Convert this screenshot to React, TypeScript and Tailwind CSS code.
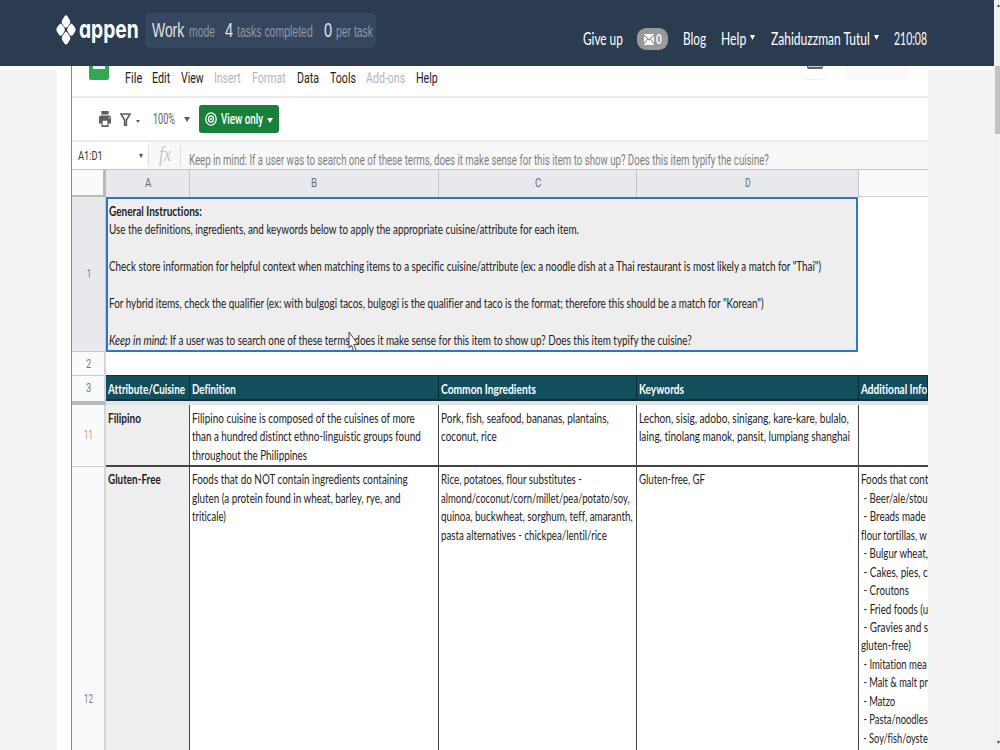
import { useLayoutEffect, useRef, useState } from 'react';

import type React from 'react';

interface FitProps {
  w: number;
  className?: string;
  children: React.ReactNode;
}

// Condenses a single line of text to the given width
function Fit({ w, className = '', children }: FitProps) {
  const ref = useRef<HTMLSpanElement>(null);
  const [scale, setScale] = useState(1);

  useLayoutEffect(() => {
    if (ref.current) setScale(w / ref.current.offsetWidth);
  }, [w]);

  return (
    <span className={`block shrink-0 whitespace-pre ${className}`} style={{ width: w }}>
      <span
        ref={ref}
        className="inline-block origin-left align-top"
        style={{ transform: `scaleX(${scale})` }}
      >
        {children}
      </span>
    </span>
  );
}

type Line = [text: string, width: number];

function Lines({ lines, className = '' }: { lines: Line[]; className?: string }) {
  return (
    <div className={`text-[14px] leading-[18.45px] ${className}`}>
      {lines.map(([text, width]) => (
        <Fit key={text} w={width}>
          {text}
        </Fit>
      ))}
    </div>
  );
}

function Caret({ className = '' }: { className?: string }) {
  return (
    <svg viewBox="0 0 10 6" preserveAspectRatio="none" className={`shrink-0 ${className}`}>
      <path d="M0 0h10L5 6z" fill="currentColor" />
    </svg>
  );
}

const menu: { label: string; width: number; gap: string; muted?: boolean }[] = [
  { label: 'File', width: 17, gap: 'ml-[17px]' },
  { label: 'Edit', width: 18, gap: 'ml-[10px]' },
  { label: 'View', width: 23, gap: 'ml-[11px]' },
  { label: 'Insert', width: 27, gap: 'ml-[10px]', muted: true },
  { label: 'Format', width: 34, gap: 'ml-[11px]', muted: true },
  { label: 'Data', width: 22, gap: 'ml-[11px]' },
  { label: 'Tools', width: 26, gap: 'ml-[11px]' },
  { label: 'Add-ons', width: 39, gap: 'ml-[10px]', muted: true },
  { label: 'Help', width: 22, gap: 'ml-[11px]' },
];

const glutenInfo: Line[] = [
  ['Foods that cont', 67],
  [' - Beer/ale/stou', 67],
  [' - Breads made', 65],
  ['flour tortillas, w', 66],
  [' - Bulgur wheat,', 67],
  [' - Cakes, pies, c', 67],
  [' - Croutons', 48],
  [' - Fried foods (u', 67],
  [' - Gravies and s', 67],
  ['gluten-free)', 50],
  [' - Imitation mea', 66],
  [' - Malt & malt pr', 67],
  [' - Matzo', 34],
  [' - Pasta/noodles', 67],
  [' - Soy/fish/oyste', 67],
];

function Header() {
  return (
    <header className="flex h-[66px] shrink-0 bg-[#2b3c50] text-white">
      <svg viewBox="0 0 20 30" className="mt-[15px] ml-[56px] h-[30px] w-[20px] shrink-0" fill="#fff">
        <path d="M10 0Q11.200 .3 14 5.400Q14.600 6.800 14 8.200Q11.400 12.800 10 12.800Q8.600 12.800 6 8.200Q5.400 6.800 6 5.400Q8.800 .3 10 0Z" />
        <path d="M10 16.600Q11.200 16.900 14 21.800Q14.600 23.200 14 24.500Q11.400 29.500 10 29.500Q8.600 29.500 6 24.500Q5.400 23.200 6 21.800Q8.800 16.900 10 16.600Z" />
        <path d="M4.600 8.600Q5.800 8.900 8.600 13.500Q9.100 14.800 8.600 16.100Q6 21 4.600 21Q3.300 21 .6 16.100Q.1 14.800 .6 13.500Q3.400 8.900 4.600 8.600Z" />
        <path d="M15.400 8.600Q16.600 8.900 19.400 13.500Q19.900 14.800 19.400 16.100Q16.800 21 15.400 21Q14.100 21 11.400 16.100Q10.900 14.800 11.400 13.500Q14.200 8.900 15.400 8.600Z" />
      </svg>
      <Fit
        w={60}
        className="mt-[14px] ml-[3px] font-[Inter,sans-serif] text-[25px] leading-[30px] font-bold [font-feature-settings:'cv11']"
      >
        appen
      </Fit>
      <div className="mt-[13px] ml-[6px] flex h-[35px] w-[231px] shrink-0 items-baseline rounded-[5px] bg-[#34475f] pl-[7px] font-['Liberation_Sans',sans-serif] leading-[34px] text-[#e2e2e2]">
        <Fit w={32} className="text-[20px]">Work</Fit>
        <Fit w={26} className="ml-[5px] text-[16px] text-[#8f969e]">mode</Fit>
        <Fit w={8} className="ml-[10px] text-[20px]">4</Fit>
        <Fit w={76} className="ml-[4px] text-[16px] text-[#8f969e]">tasks completed</Fit>
        <Fit w={8} className="ml-[11px] text-[20px]">0</Fit>
        <Fit w={37} className="ml-[4px] text-[16px] text-[#8f969e]">per task</Fit>
      </div>
      <nav className="mt-[13px] ml-[207px] flex h-[50px] items-center text-[18px]">
        <Fit w={40}>Give up</Fit>
        <span className="mt-[2px] ml-[14px] flex h-[22px] w-[31px] shrink-0 items-center rounded-[9px] bg-[#999] pl-[7px]">
          <svg viewBox="0 0 10 11" className="h-[11px] w-[10px] shrink-0">
            <path d="M0 0h10v11H0z" fill="#fff" />
            <path d="M0 1l5 5 5-5M0 10l3.500-5M10 10L6.500 5" fill="none" stroke="#999" strokeWidth="1.100" />
          </svg>
          <Fit w={6} className="ml-[2px] text-[13px] leading-[22px] font-bold">0</Fit>
        </span>
        <Fit w={23} className="ml-[15px]">Blog</Fit>
        <Fit w={25} className="ml-[15px]">Help</Fit>
        <Caret className="mb-[2px] ml-[4px] h-[5px] w-[5px]" />
        <Fit w={99} className="ml-[16px]">Zahiduzzman Tutul</Fit>
        <Caret className="mb-[2px] ml-[4px] h-[5px] w-[5px]" />
        <Fit w={33} className="mt-[3px] ml-[15px] text-[16.500px]">210:08</Fit>
      </nav>
    </header>
  );
}

function MenuBar() {
  return (
    <div className="flex h-[32px] shrink-0 border-b-2 border-[#ebebeb] font-[Roboto,sans-serif] text-[15.500px] leading-[24px] text-[#202124]">
      <div className="ml-[17px] h-[14px] w-[20px] shrink-0 rounded-b-[2px] bg-[#35a652] pl-[4px]">
        <div className="h-[3px] w-[12px] bg-[#e6f5ea]" />
      </div>
      <div className="ml-[-1px] flex w-[698px] shrink-0">
        {menu.map((item) => (
          <Fit
            key={item.label}
            w={item.width}
            className={`${item.gap} ${item.muted ? 'text-[#b4b6b9]' : ''}`}
          >
            {item.label}
          </Fit>
        ))}
      </div>
      <div className="ml-[-8px] flex h-[14px] w-[34px] shrink-0 justify-center rounded-b-[14px] border-b border-[#eee]">
        <div className="h-[3px] w-[16px] rounded-b-[2px] border-x border-b-2 border-[#5f6368] bg-[#ccc]" />
      </div>
      <div className="ml-[13px] h-[14px] w-[65px] shrink-0 bg-[#fafafa]" />
    </div>
  );
}

function Toolbar() {
  return (
    <div className="flex h-[44px] shrink-0 items-center border-b-2 border-[#ebebeb] font-[Roboto,sans-serif] text-[#5a5d61]">
      <svg viewBox="2 3 20 18" preserveAspectRatio="none" className="ml-[27px] h-[16px] w-[12px] shrink-0">
        <path
          d="M19 8H5c-1.660 0-3 1.340-3 3v6h4v4h12v-4h4v-6c0-1.660-1.340-3-3-3zm-3 11H8v-5h8v5zm3-7c-.55 0-1-.45-1-1s.45-1 1-1 1 .45 1 1-.45 1-1 1zm-1-9H6v4h12V3z"
          fill="currentColor"
        />
      </svg>
      <svg viewBox="0 0 12 13" preserveAspectRatio="none" className="ml-[9px] h-[13px] w-[11px] shrink-0">
        <path d="M1 1h10L7 7v5.500H5V7z" fill="none" stroke="currentColor" strokeWidth="1.700" />
      </svg>
      <Caret className="mt-[4px] ml-[5px] h-[3px] w-[4px]" />
      <Fit w={22} className="ml-[13px] text-[14px]">100%</Fit>
      <Caret className="mt-[1px] ml-[9px] h-[5px] w-[6px]" />
      <button className="ml-[9px] flex h-[28px] w-[80px] shrink-0 items-center rounded-[3px] bg-[#188038] pl-[6px] text-white">
        <svg viewBox="0 0 12 14" className="h-[14px] w-[12px] shrink-0" fill="none" stroke="#fff">
          <ellipse cx="6" cy="7" rx="5.200" ry="6.100" strokeWidth="1.300" />
          <ellipse cx="6" cy="7" rx="2.500" ry="3.200" strokeWidth="1.300" />
          <ellipse cx="6" cy="7" rx=".7" ry="1" fill="#fff" strokeWidth=".5" />
        </svg>
        <Fit w={42} className="ml-[4px] text-[14px] font-medium">View only</Fit>
        <Caret className="mt-[2px] ml-[4px] h-[5px] w-[6px]" />
      </button>
    </div>
  );
}

function FormulaBar() {
  return (
    <div className="flex h-[27px] shrink-0 items-center bg-[#f8f8f8] font-[Roboto,sans-serif]">
      <div className="flex h-full w-[76px] shrink-0 items-center bg-white pl-[6px] text-[#333]">
        <Fit w={25} className="text-[13px]">A1:D1</Fit>
        <Caret className="ml-[36px] h-[4px] w-[4px] text-[#555]" />
      </div>
      <div className="h-[21px] w-px bg-[#ddd]" />
      <Fit w={12} className="mb-[4px] ml-[10px] font-['Liberation_Serif',serif] text-[21px] leading-[24px] text-[#c4c4c4] italic">
        fx
      </Fit>
      <div className="ml-[9px] h-[21px] w-px bg-[#ddd]" />
      <Fit w={580} className="mt-[9px] ml-[8px] text-[14px] leading-[18px] text-[#808080]">
        Keep in mind: If a user was to search one of these terms, does it make sense for this item to show up? Does this item typify the cuisine?
      </Fit>
    </div>
  );
}

const columns = 'grid w-[856px] shrink-0 grid-cols-[34px_84px_249px_198px_222px_69px]';
const rowHead =
  'flex items-center justify-center border-r-2 border-r-[#d3d5d9] bg-[#f9fafc] font-[Roboto,sans-serif] text-[13px] text-[#777b80]';
const darkCell = 'overflow-hidden border-r border-[#444] pl-[2px]';

function Sheet() {
  return (
    <div className="flex flex-col text-[#222] [font-variant-ligatures:none]">
      <div className={`${columns} h-[28px] border-t border-[#c4c6c9] font-[Roboto,sans-serif] text-[13px] leading-[26px] text-[#6c7075]`}>
        <div className="border-r-3 border-b-2 border-r-[#b9b9b9] border-b-[#bbb] bg-[#f9fafc]" />
        {['A', 'B', 'C', 'D'].map((name) => (
          <div key={name} className="flex justify-center border-r border-[#c4c6c9] bg-[#e7e9ec]">
            <Fit w={6}>{name}</Fit>
          </div>
        ))}
        <div className="border-b border-[#d0d0d0] bg-[#f9fafc]" />
      </div>

      <div className="flex h-[155px] shrink-0">
        <div className="flex w-[34px] shrink-0 items-center justify-center border-r border-b border-[#c4c6c9] bg-[#e7e9ec] font-[Roboto,sans-serif] text-[13px] text-[#6c7075]">
          <Fit w={4}>1</Fit>
        </div>
        <div className="w-[752px] shrink-0 border-2 border-[#2f74c8] bg-[#eee] pt-[2.500px] pl-[1px] text-[14px] leading-[18.450px]">
          <Fit w={93} className="font-bold">General Instructions:</Fit>
          <Fit w={470}>
            Use the definitions, ingredients, and keywords below to apply the appropriate cuisine/attribute for each item.
          </Fit>
          <Fit w={712} className="mt-[18.450px]">
            Check store information for helpful context when matching items to a specific cuisine/attribute (ex: a noodle dish at a Thai restaurant is most likely a match for "Thai")
          </Fit>
          <Fit w={655} className="mt-[18.450px]">
            For hybrid items, check the qualifier (ex: with bulgogi tacos, bulgogi is the qualifier and taco is the format; therefore this should be a match for "Korean")
          </Fit>
          <div className="mt-[18.450px] flex">
            <Fit w={59} className="italic">Keep in mind:</Fit>
            <Fit w={522} className="ml-[2px]">
              If a user was to search one of these terms, does it make sense for this item to show up? Does this item typify the cuisine?
            </Fit>
          </div>
        </div>
      </div>

      <div className={`${columns} h-[23px]`}>
        <div className={rowHead}>
          <Fit w={5}>2</Fit>
        </div>
      </div>

      <div className={`${columns} h-[26px] text-[14px] font-bold text-white`}>
        <div className={`${rowHead} border-t border-t-[#ccc] pb-[2px] font-normal`}>
          <Fit w={5}>3</Fit>
        </div>
        {([
          ['Attribute/Cuisine', 77],
          ['Definition', 44],
          ['Common Ingredients', 95],
          ['Keywords', 45],
          ['Additional Info', 66],
        ] as Line[]).map(([text, width]) => (
          <div
            key={text}
            className="overflow-hidden border-t border-r border-b-2 border-y-[#1c2e35] border-r-[#0c2c35] bg-[#134e5c] pl-[2px] leading-[25px]"
          >
            <Fit w={width}>{text}</Fit>
          </div>
        ))}
      </div>

      <div className="flex h-[4px] shrink-0">
        <div className="w-[34px] bg-[#b9b9b9]" />
        <div className="w-[822px] bg-[#e0e3e8]" />
      </div>

      <div className={`${columns} h-[62px]`}>
        <div className={`${rowHead} border-b border-b-[#ccc] pb-[2px] text-[#b89a68]`}>
          <Fit w={9}>11</Fit>
        </div>
        <div className={`${darkCell} border-b-2 bg-[#eee] pt-[4px]`}>
          <Lines className="font-bold" lines={[['Filipino', 33]]} />
        </div>
        <div className={`${darkCell} border-b-2 pt-[4px]`}>
          <Lines
            lines={[
              ['Filipino cuisine is composed of the cuisines of more', 223],
              ['than a hundred distinct ethno-linguistic groups found', 229],
              ['throughout the Philippines', 115],
            ]}
          />
        </div>
        <div className={`${darkCell} border-b-2 pt-[4px]`}>
          <Lines
            lines={[
              ['Pork, fish, seafood, bananas, plantains,', 168],
              ['coconut, rice', 56],
            ]}
          />
        </div>
        <div className={`${darkCell} border-b-2 pt-[4px]`}>
          <Lines
            lines={[
              ['Lechon, sisig, adobo, sinigang, kare-kare, bulalo,', 210],
              ['laing, tinolang manok, pansit, lumpiang shanghai', 211],
            ]}
          />
        </div>
        <div className="border-b-2 border-[#444]" />
      </div>

      <div className={`${columns} h-[470px]`}>
        <div className={`${rowHead} pb-[7px]`}>
          <Fit w={9}>12</Fit>
        </div>
        <div className={`${darkCell} bg-[#eee] pt-[3.400px]`}>
          <Lines className="font-bold" lines={[['Gluten-Free', 53]]} />
        </div>
        <div className={`${darkCell} pt-[3.400px]`}>
          <Lines
            lines={[
              ['Foods that do NOT contain ingredients containing', 216],
              ['gluten (a protein found in wheat, barley, rye, and', 209],
              ['triticale)', 34],
            ]}
          />
        </div>
        <div className={`${darkCell} pt-[3.400px]`}>
          <Lines
            lines={[
              ['Rice, potatoes, flour substitutes -', 141],
              ['almond/coconut/corn/millet/pea/potato/soy,', 189],
              ['quinoa, buckwheat, sorghum, teff, amaranth,', 192],
              ['pasta alternatives - chickpea/lentil/rice', 166],
            ]}
          />
        </div>
        <div className={`${darkCell} pt-[3.400px]`}>
          <Lines lines={[['Gluten-free, GF', 66]]} />
        </div>
        <div className="overflow-hidden pt-[3.400px] pl-[2px]">
          <Lines lines={glutenInfo} />
        </div>
      </div>
    </div>
  );
}

function Pointer() {
  return (
    <svg viewBox="0 0 12 22" className="absolute top-[331px] left-[348px] h-[22px] w-[12px]">
      <path d="M1 1v16l2.500-3 2.200 6.500 2.300-1.200-2.200-6H10z" fill="#fff" stroke="#444" strokeWidth="1" />
    </svg>
  );
}

export default function App() {
  return (
    <div className="relative flex h-[750px] w-[1000px] overflow-hidden bg-[#f3f3f3] font-[Lato,sans-serif]">
      <div className="flex w-[994px] shrink-0 flex-col">
        <Header />
        <div className="flex h-[684px] shrink-0">
          <div className="h-[4px] w-[57px] shrink-0 bg-[#fafafa]" />
          <main className="flex w-[871px] shrink-0 flex-col overflow-hidden bg-white pl-[14px]">
            <div className="flex flex-col border-l border-[#888]">
              <MenuBar />
              <Toolbar />
              <FormulaBar />
              <Sheet />
            </div>
          </main>
          <div className="h-[4px] flex-1 bg-[#fafafa]" />
        </div>
      </div>
      <aside className="flex w-[6px] shrink-0 flex-col items-end bg-[#f1f1f1]">
        <Caret className="mt-[4px] h-[3px] w-[3px] rotate-180 text-[#444]" />
        <div className="mt-[59px] h-[68px] w-[5px] bg-[#c1c1c1]" />
        <Caret className="mt-auto mb-[6px] h-[3px] w-[3px] text-[#444]" />
      </aside>
      <Pointer />
    </div>
  );
}
